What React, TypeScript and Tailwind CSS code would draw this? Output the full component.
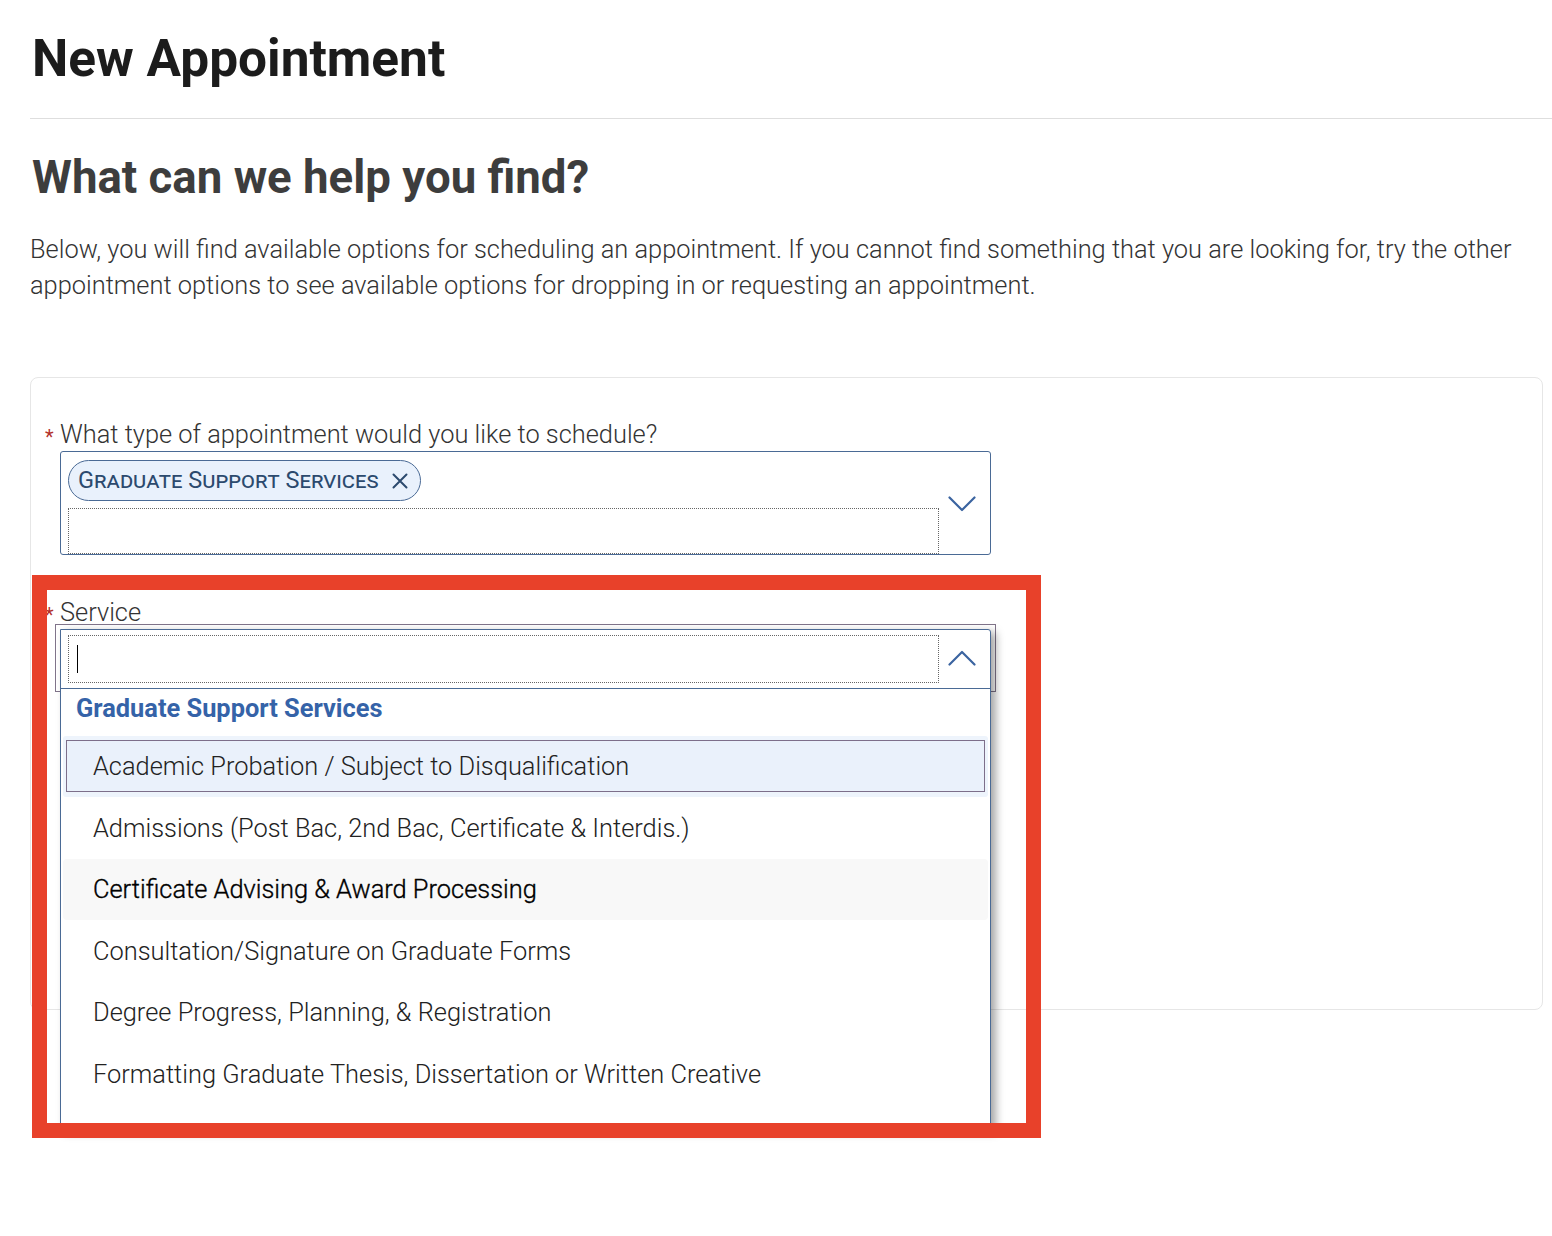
import React from "react";

const options = [
  "Academic Probation / Subject to Disqualification",
  "Admissions (Post Bac, 2nd Bac, Certificate & Interdis.)",
  "Certificate Advising & Award Processing",
  "Consultation/Signature on Graduate Forms",
  "Degree Progress, Planning, & Registration",
  "Formatting Graduate Thesis, Dissertation or Written Creative",
];

const Chevron = ({ up = false }: { up?: boolean }) => (
  <svg width="28" height="16" viewBox="0 0 28 16" fill="none">
    <path
      d={up ? "M1.5 14.5 L14 2 L26.5 14.5" : "M1.5 1.5 L14 14 L26.5 1.5"}
      stroke="#3b64a0"
      strokeWidth="2.2"
      strokeLinecap="round"
      strokeLinejoin="round"
    />
  </svg>
);

const Label = ({ children, className = "" }: { children: React.ReactNode; className?: string }) => (
  <div className={`flex h-[26px] items-center leading-[26px] ${className}`}>
    <span className="w-[15px] pt-[6px] text-[20px] leading-none text-[#b3322b]">*</span>
    <span className="text-[25.4px] font-light text-[#333]">{children}</span>
  </div>
);

export default function App() {
  return (
    <div className="relative min-h-[1236px] w-full bg-white font-['Roboto',sans-serif] text-[#333]">
      <div className="pl-[30px]">
        {/* Header */}
        <div className="border-b border-[#dedede] pt-[29px] pb-[29px]">
          <h1 className="pl-[2px] text-[51.4px] leading-[60px] font-bold text-[#1c1c1c]">New Appointment</h1>
        </div>

        <h2 className="mt-[32px] pl-[2px] text-[45.6px] leading-[54px] font-bold text-[#3d3d3d]">
          What can we help you find?
        </h2>

        <p className="mt-[26px] pr-[4px] text-[25.4px] leading-[36px] font-light text-[#333]">
          Below, you will find available options for scheduling an appointment. If you cannot find something that you are looking for, try the other appointment options to see available options for dropping in or requesting an appointment.
        </p>

        {/* Card */}
        <div className="mt-[74px] mr-[9px] h-[633px] rounded-lg border border-[#e6e6e6] pt-[43px] pl-[14px]">
          <Label>What type of appointment would you like to schedule?</Label>

          <div className="mt-[4px] ml-[15px] flex h-[104px] w-[931px] rounded-[3px] border border-[#4a6a95]">
            <div className="flex-1 pt-[8px] pl-[7px]">
              <div className="inline-flex h-[41px] items-center gap-[13px] rounded-full border border-[#4a6a95] bg-[#e9f1fc] pr-[12px] pl-[9px] text-[23.5px] text-[#2c4a6e] [font-variant:small-caps]">
                <span>Graduate Support Services</span>
                <svg width="16" height="16" viewBox="0 0 16 16">
                  <path d="M1.5 1.5 L14.5 14.5 M14.5 1.5 L1.5 14.5" stroke="#2c4a6e" strokeWidth="2" strokeLinecap="round" />
                </svg>
              </div>
              <div className="mt-[7px] h-[46px] w-[871px] border border-dotted border-[#666]" />
            </div>
            <div className="flex w-[52px] justify-center pt-[44px] pr-[6px]">
              <Chevron />
            </div>
          </div>

          <Label className="mt-[44px]">Service</Label>

          <div className="relative -mt-[1px] ml-[10px] h-[68px] w-[941px] border border-[#80748a]">
            {/* open listbox */}
            <div className="absolute top-[4px] left-[4px] z-10 h-[501px] w-[931px] rounded-tr-[3px] border border-[#4a6a95] bg-white shadow-[5px_3px_8px_rgba(0,0,0,0.35)]">
              <div className="flex h-[59px] border-b border-[#4a6a95] pt-[5px] pl-[7px]">
                <div className="flex h-[48px] w-[871px] items-center border border-dotted border-[#666] pl-[8px]">
                  <div className="h-[28px] w-[1px] bg-black" />
                </div>
                <div className="flex flex-1 justify-center pt-[15px] pr-[6px]">
                  <Chevron up />
                </div>
              </div>
              <div className="h-[47px] pt-[5px] pl-[15px] text-[25.4px] leading-[28px] font-bold text-[#3563a8]">
                Graduate Support Services
              </div>
              <div className="px-[2px]">
                {options.map((opt, i) => {
                  if (i === 0) {
                    return (
                      <div key={opt} className="h-[61.4px] rounded-[3px] bg-[#eef4fc] px-[3px] pt-[4px] pb-[5px]">
                        <div className="flex h-full items-center border border-[#7d6f8a] bg-[#eaf1fb] pl-[26px] text-[25.4px] font-light text-[#222]">
                          {opt}
                        </div>
                      </div>
                    );
                  }
                  return (
                    <div
                      key={opt}
                      className={`flex h-[61.4px] items-center rounded-[4px] pl-[30px] text-[25.4px] font-light ${
                        i === 2 ? "bg-[#f8f8f8] text-[#000] [-webkit-text-stroke:0.35px_#000]" : "text-[#222]"
                      }`}
                    >
                      {opt}
                    </div>
                  );
                })}
              </div>
            </div>
          </div>
        </div>
      </div>

      {/* annotation box */}
      <div className="pointer-events-none absolute top-[575px] left-[32px] z-20 h-[563px] w-[1009px] border-[15px] border-[#e8412a]" />
    </div>
  );
}
